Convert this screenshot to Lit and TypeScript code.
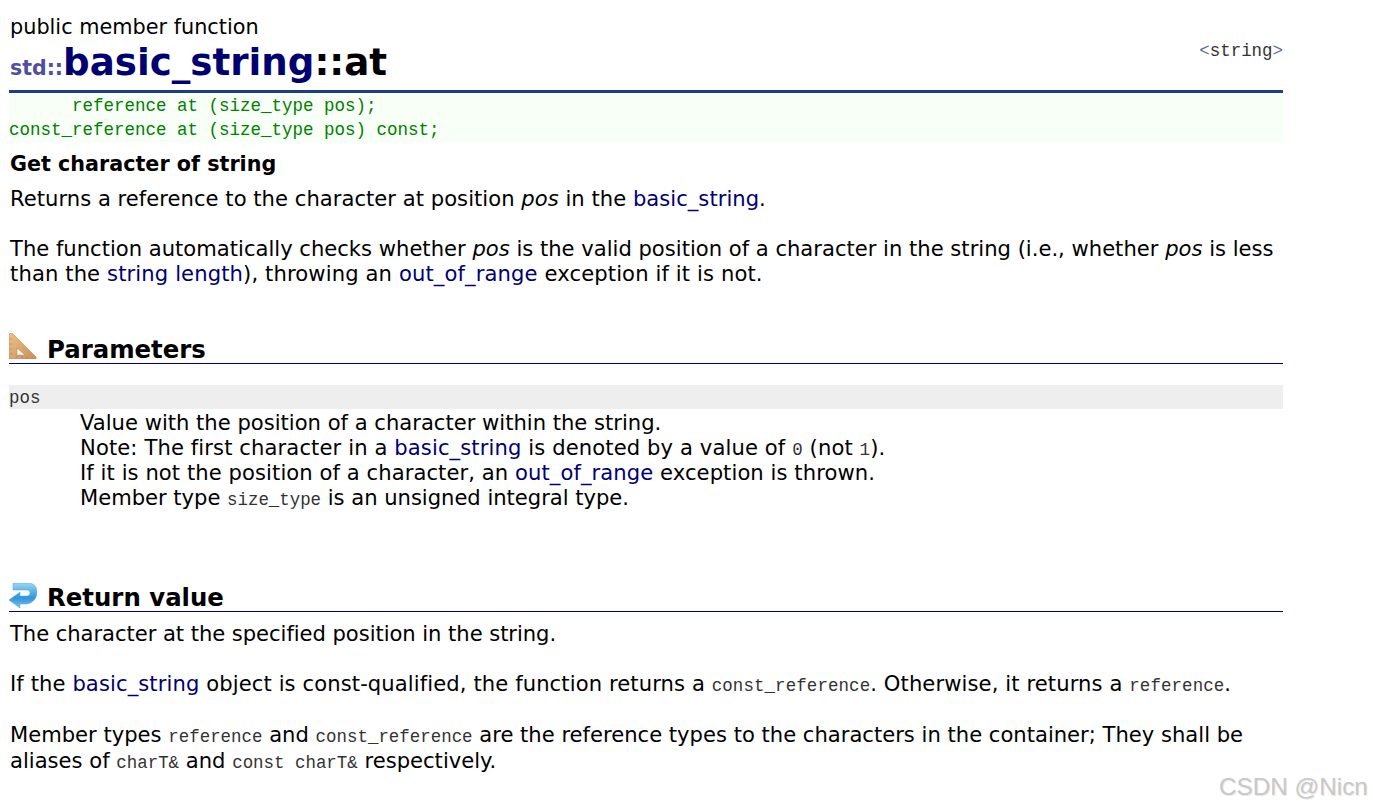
import { LitElement, html, css, svg } from "lit";
import { customElement } from "lit/decorators.js";

const ruler = svg`<svg class="ico r" width="28" height="26" viewBox="0 0 28 26">
  <defs><linearGradient id="rg" x1="0" y1="0" x2="1" y2="1"><stop offset="0" stop-color="#eec08c"/><stop offset="1" stop-color="#c98f55"/></linearGradient></defs>
  <path fill-rule="evenodd" d="M0 1 L3 0 L27 24 L27 26 L0 26 Z M8 15 L8 22 L16 22 Z" fill="url(#rg)" stroke="#bd8650" stroke-width=".6"/>
  <path d="M1 6h2.500M1 11h2.500M1 16h2.500M1 21h2.500M8 25v-2M13 25v-2M18 25v-2" stroke="#a87342" stroke-width=".7" fill="none" opacity=".7"/>
</svg>`;

const ret = svg`<svg class="ico t" width="28" height="26" viewBox="0 0 28 26">
  <defs><linearGradient id="bg" x1="0" y1="0" x2="0" y2="1"><stop offset="0" stop-color="#9ad6f5"/><stop offset=".6" stop-color="#2f95dc"/><stop offset="1" stop-color="#7fc4ec"/></linearGradient></defs>
  <path d="M4 0 H19 C25 0 28 4 28 9 C28 15 24 20 18 21 H11 V25 L0 17 L11 9 V13 H18 C20 13 21 11 21 10 C21 8 20 7 18 7 H4 Z" fill="url(#bg)" stroke="#4fa6e0" stroke-width=".5"/>
</svg>`;

@customElement("app-root")
export class AppRoot extends LitElement {
  static styles = css`
    :host { display: block; width: 1373px; height: 810px; position: relative; overflow: hidden; background: #fff; color: #000;
      font-family: "DejaVu Sans", Verdana, sans-serif; font-size: 21.1px; line-height: 25px; }
    .page { width: 1274px; margin-left: 9px; padding-top: 15px; display: flex; flex-direction: column; }
    .kind { height: 25px; font-size: 20.8px; padding-left: 1px; }
    .titlebar { display: flex; justify-content: space-between; align-items: flex-start; height: 50px; border-bottom: 3px solid #1f3c85; }
    .title { font-weight: 700; font-size: 37.2px; line-height: 44px; color: #000; white-space: nowrap; padding-left: 1px; }
    .title .ns { font-size: 20.5px; color: #4f4f9f; }
    .title .cl { color: #000070; }
    .hdr { font-family: "Liberation Mono", monospace; font-size: 17.45px; line-height: 22px; color: #333; }
    .hdr .b { color: #5a6f9f; }
    .proto { background: #f7fff7; color: #008000; font-family: "Liberation Mono", monospace; font-size: 17.5px; line-height: 24px; height: 48px; padding-top: 1px; white-space: pre; }
    .sub { font-weight: 700; font-size: 20.7px; height: 25px; margin-top: 10px; padding-left: 1px; }
    p { margin: 0; padding-left: 1px; }
    .p1 { margin-top: 9px; }
    .gap { margin-top: 25px; }
    .last { line-height: 26px; margin-top: 26px; }
    a { color: #000070; text-decoration: none; }
    code { font-family: "Liberation Mono", monospace; font-size: 17.45px; line-height: 1; color: #333; }
    h2 { margin: 0; font-size: 24.4px; font-weight: 700; display: flex; align-items: flex-end; gap: 10px; border-bottom: 1px solid #000080; height: 32px; }
    h2 .ico { flex: none; }
    h2 .r { margin-bottom: 4px; }
    h2 .t { margin-bottom: 2px; }
    h2 span { line-height: 26px; }
    .params { margin-top: 45px; }
    .band { background: #eee; margin-top: 21px; height: 24px; line-height: 27px; font-family: "Liberation Mono", monospace; font-size: 17.45px; color: #333; }
    .dd { margin-left: 71px; margin-top: 1px; }
    .ret { margin-top: 69px; }
    .after { margin-top: 9px; }
    .ls-a { letter-spacing: 0.12px; }
    .ls-b { letter-spacing: 0.03px; }
    .ls-c { letter-spacing: 0.11px; }
    .ls-d { letter-spacing: 0.075px; }
    .ls-e { letter-spacing: -0.02px; }
    .ls-f { letter-spacing: -0.05px; }
    .ls-g { letter-spacing: 0.1px; }
    .wm { position: absolute; left: 1219px; top: 771px; font-family: "Liberation Sans", Arial, sans-serif; font-size: 24.3px; line-height: 32px; color: #c8c8c8; text-shadow: 1px 1px 1px #e6e6e6; }
  `;

  render() {
    return html`
      <div class="page">
        <div class="kind">public member function</div>
        <div class="titlebar">
          <div class="title"><span class="ns">std::</span><span class="cl">basic_string</span>::at</div>
          <div class="hdr"><span class="b">&lt;</span>string<span class="b">&gt;</span></div>
        </div>
        <div class="proto">      reference at (size_type pos);
const_reference at (size_type pos) const;</div>
        <div class="sub">Get character of string</div>
        <p class="p1 ls-b">Returns a reference to the character at position <i>pos</i> in the <a>basic_string</a>.</p>
        <p class="gap">The function automatically checks whether <i>pos</i> is the valid position of a character in the string (i.e., whether <i>pos</i> is less <span class="ls-a">than the <a>string length</a>), throwing an <a>out_of_range</a> exception if it is not.</span></p>
        <h2 class="params">${ruler}<span>Parameters</span></h2>
        <div class="band">pos</div>
        <div class="dd">
          Value with the position of a character within the string.<br>
          <span class="ls-c">Note: The first character in a <a>basic_string</a> is denoted by a value of <code>0</code> (not <code>1</code>).</span><br>
          <span class="ls-d">If it is not the position of a character, an <a>out_of_range</a> exception is thrown.</span><br>
          <span class="ls-e">Member type <code>size_type</code> is an unsigned integral type.</span>
        </div>
        <h2 class="ret">${ret}<span>Return value</span></h2>
        <p class="after ls-f">The character at the specified position in the string.</p>
        <p class="gap ls-g">If the <a>basic_string</a> object is const-qualified, the function returns a <code>const_reference</code>. Otherwise, it returns a <code>reference</code>.</p>
        <p class="last">Member types <code>reference</code> and <code>const_reference</code> are the reference types to the characters in the container; They shall be aliases of <code>charT&amp;</code> and <code>const charT&amp;</code> respectively.</p>
      </div>
      <div class="wm">CSDN @Nicn</div>
    `;
  }
}
